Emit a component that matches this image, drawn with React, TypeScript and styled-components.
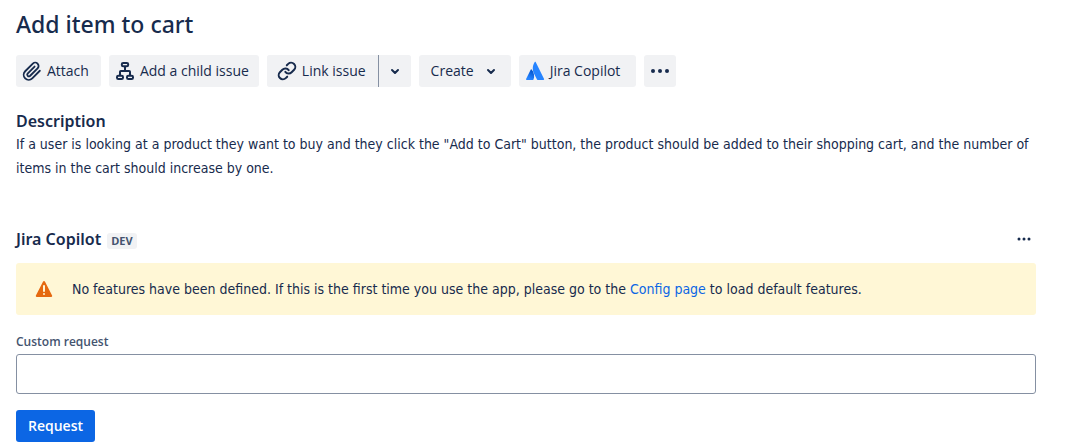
import React from "react";
import styled, { createGlobalStyle } from "styled-components";

const GlobalStyle = createGlobalStyle`
  *, *::before, *::after { box-sizing: border-box; }
  body {
    margin: 0;
    background: #ffffff;
    color: #172b4d;
    font-family: "Open Sans", "Noto Sans", sans-serif;
    font-size: 14px;
    line-height: 24px;
  }
  button, input { font: inherit; color: inherit; }
`;

const Page = styled.main`
  padding: 8px 30px 5px 16px;
`;

const Title = styled.h1`
  margin: 0;
  font-family: "Noto Sans", sans-serif;
  font-size: 23px;
  line-height: 32px;
  font-weight: 500;
`;

const Toolbar = styled.div`
  display: flex;
  flex-wrap: wrap;
  gap: 8px;
  margin-top: 15px;
`;

const Button = styled.button<{ $pad?: string; $gap?: number }>`
  display: inline-flex;
  align-items: center;
  justify-content: center;
  gap: ${(p) => p.$gap ?? 5}px;
  height: 32px;
  padding: ${(p) => p.$pad ?? "0 12px 0 6px"};
  border: 0;
  border-radius: 3px;
  background: #f1f2f4;
  font-weight: 500;
  white-space: nowrap;
  cursor: pointer;
`;

const IconButton = styled(Button)`
  width: 32px;
  padding: 0;
`;

const SplitButton = styled.div`
  display: flex;
  border-radius: 3px;
  background: #f1f2f4;

  button + button {
    width: 33px;
    border-left: 1px solid #8590a2;
    border-radius: 0 3px 3px 0;
  }
`;

const Section = styled.section`
  margin-top: 24px;
`;

const Heading = styled.h2`
  margin: 0;
  font-family: "Noto Sans", sans-serif;
  font-size: 16px;
  line-height: 20px;
  font-weight: 600;
`;

const Paragraph = styled.p`
  margin: 0;
  font-family: "DejaVu Sans Condensed", "DejaVu Sans", sans-serif;
`;

const Description = styled(Paragraph)`
  margin-top: 1px;
`;

const Panel = styled.section`
  margin-top: 47px;
`;

const PanelHeader = styled.header`
  display: flex;
  align-items: center;
  gap: 6px;
  height: 24px;
`;

const Lozenge = styled.span`
  margin-top: 4px;
  padding: 0 4px;
  border-radius: 3px;
  background: #f1f2f4;
  color: #44546f;
  font-size: 11px;
  line-height: 16px;
  font-weight: 700;
`;

const MoreButton = styled.button`
  display: flex;
  align-items: center;
  justify-content: center;
  width: 24px;
  height: 24px;
  margin-left: auto;
  padding: 0;
  border: 0;
  background: none;
  cursor: pointer;
`;

const Banner = styled.div`
  display: flex;
  align-items: center;
  gap: 16px;
  margin-top: 12px;
  padding: 14px 16px;
  border-radius: 3px;
  background: #fff7d6;
`;

const Link = styled.a`
  color: #0c66e4;
  text-decoration: none;
`;

const Label = styled.label`
  display: block;
  margin-top: 19px;
  color: #44546f;
  font-size: 12px;
  line-height: 16px;
  font-weight: 600;
`;

const TextField = styled.input`
  display: block;
  width: 100%;
  height: 40px;
  margin: 4px 0 16px;
  padding: 8px;
  border: 1px solid #8590a2;
  border-radius: 3px;
  background: #ffffff;
`;

const PrimaryButton = styled(Button)`
  background: #0c66e4;
  color: #ffffff;
  font-weight: 600;
`;

const Icon = ({ size = 24, children }: { size?: number; children: React.ReactNode }) => (
  <svg width={size} height={size} viewBox="0 0 24 24" fill="none" aria-hidden="true">
    {children}
  </svg>
);

const AttachIcon = () => (
  <Icon size={20}>
    <path
      d="M21.4 11.1 12.3 20.2a6 6 0 0 1-8.5-8.5l9.2-9.2a4 4 0 0 1 5.7 5.7l-9.2 9.2a2 2 0 0 1-2.8-2.8l8.4-8.5"
      stroke="currentColor" strokeWidth="2.2" strokeLinecap="round" strokeLinejoin="round"
      transform="translate(0 .6)"
    />
  </Icon>
);

const ChildIssueIcon = () => (
  <Icon size={20}>
    <g stroke="currentColor" strokeWidth="2.4" strokeLinejoin="round">
      <rect x="8.2" y="2.4" width="7.6" height="4" rx="1.6" />
      <rect x="2.4" y="17.6" width="7.2" height="4" rx="1.6" />
      <rect x="14.4" y="17.6" width="7.2" height="4" rx="1.6" />
      <path d="M12 6.4V12M6 17.6V13q0-1 1-1h10q1 0 1 1v4.6" />
    </g>
  </Icon>
);

const LinkIcon = () => (
  <Icon size={20}>
    <g stroke="currentColor" strokeWidth="2.4" strokeLinecap="round" strokeLinejoin="round">
      <path d="M10 13a5 5 0 0 0 7.54.54l3-3a5 5 0 0 0-7.07-7.07l-1.72 1.71" />
      <path d="M14 11a5 5 0 0 0-7.54-.54l-3 3a5 5 0 0 0 7.07 7.07l1.71-1.71" />
    </g>
  </Icon>
);

const ChevronIcon = () => (
  <Icon>
    <path d="m9 11 3 3 3-3" stroke="currentColor" strokeWidth="2" strokeLinecap="round" strokeLinejoin="round" />
  </Icon>
);

const AtlassianIcon = () => (
  <Icon size={20}>
    <defs>
      <linearGradient id="mark" x1="10" y1="12" x2="5" y2="21" gradientUnits="userSpaceOnUse">
        <stop stopColor="#0052cc" />
        <stop offset="1" stopColor="#2684ff" />
      </linearGradient>
    </defs>
    <path d="M8 10.3a.7.7 0 0 0-1.2.1L1.3 21.7c-.2.5.1 1 .6 1h7.7c.3 0 .5-.1.6-.4 1.6-3.4.7-8.6-2.200-12Z" fill="url(#mark)" />
    <path d="M11.7 1.3c-3.1 4.9-2.9 10-.8 14.1l3.5 6.9c.1.3.4.4.7.4h7.1c.6 0 .9-.6.7-1L12.8 1.3c-.2-.5-.8-.5-1.1 0Z" fill="#2684ff" />
  </Icon>
);

const DotsIcon = ({ r, step }: { r: number; step: number }) => (
  <Icon>
    <g fill="currentColor">
      <circle cx={12 - step} cy="12" r={r} />
      <circle cx="12" cy="12" r={r} />
      <circle cx={12 + step} cy="12" r={r} />
    </g>
  </Icon>
);

const WarningIcon = () => (
  <Icon>
    <path
      d="M12.9 4.6 20.1 18.5c.3.7-.1 1.5-.8 1.5H4.7c-.7 0-1.1-.8-.8-1.5L11.1 4.6c.4-.8 1.4-.8 1.8 0Z"
      fill="#e56910"
    />
    <path d="M12 9v5" stroke="#fff7d6" strokeWidth="2" strokeLinecap="round" />
    <circle cx="12" cy="17" r="1" fill="#fff7d6" />
  </Icon>
);

export default function App() {
  return (
    <>
      <GlobalStyle />
      <Page>
        <Title>Add item to cart</Title>
        <Toolbar>
          <Button><AttachIcon />Attach</Button>
          <Button $pad="0 10px 0 6px"><ChildIssueIcon />Add a child issue</Button>
          <SplitButton>
            <Button $pad="0 12px 0 10px"><LinkIcon />Link issue</Button>
            <IconButton aria-label="More link options"><ChevronIcon /></IconButton>
          </SplitButton>
          <Button $pad="0 8px 0 12px"><span>Create</span><ChevronIcon /></Button>
          <Button $pad="0 16px 0 6px"><AtlassianIcon />Jira Copilot</Button>
          <IconButton aria-label="More actions"><DotsIcon r={2} step={7} /></IconButton>
        </Toolbar>

        <Section>
          <Heading>Description</Heading>
          <Description>
            If a user is looking at a product they want to buy and they click the "Add to Cart" button, the
            product should be added to their shopping cart, and the number of items in the cart should
            increase by one.
          </Description>
        </Section>

        <Panel>
          <PanelHeader>
            <Heading>Jira Copilot</Heading>
            <Lozenge>DEV</Lozenge>
            <MoreButton aria-label="Panel actions"><DotsIcon r={1.5} step={5} /></MoreButton>
          </PanelHeader>
          <Banner role="status">
            <WarningIcon />
            <Paragraph>
              No features have been defined. If this is the first time you use the app, please go to
              the <Link href="#config">Config page</Link> to load default features.
            </Paragraph>
          </Banner>
          <Label htmlFor="custom-request">Custom request</Label>
          <TextField id="custom-request" type="text" />
          <PrimaryButton $pad="0 12px">Request</PrimaryButton>
        </Panel>
      </Page>
    </>
  );
}
